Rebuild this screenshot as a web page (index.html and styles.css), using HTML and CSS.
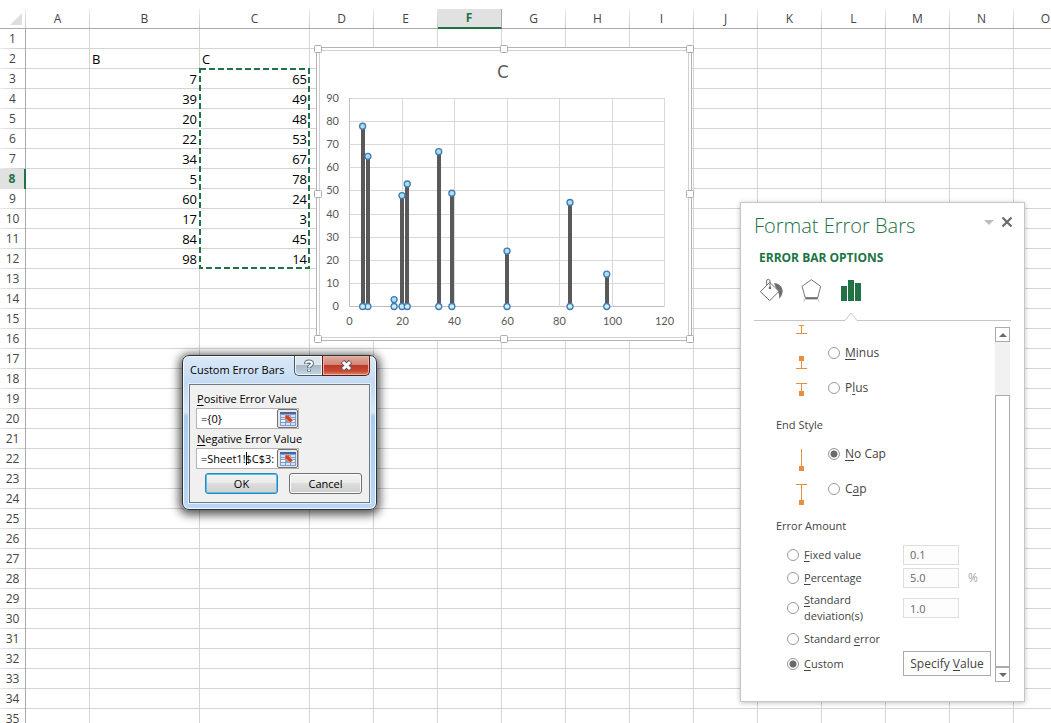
FILE: index.html
```html
<!DOCTYPE html>
<html lang="en">
<head>
<meta charset="utf-8">
<title>Sheet1</title>
<link rel="stylesheet" href="styles.css">
</head>
<body>
<main class="workspace">
  <table class="sheet" id="sheet" aria-label="Sheet1"></table>

  <svg class="ants" width="114" height="204" viewBox="0 0 114 204" aria-hidden="true">
    <rect class="ants-base" x="2" y="2" width="109" height="199"/>
    <rect class="ants-dash" x="2" y="2" width="109" height="199"/>
  </svg>

  <svg class="chart" width="382" height="300" viewBox="313 44 382 300" role="img" aria-label="C">
    <rect class="frame-outer" x="316.5" y="47.5" width="375" height="293"/>
    <rect class="frame-inner" x="319.5" y="50.5" width="369" height="287"/>
    <g id="handles"></g>
    <text class="chart-title" x="503" y="78">C</text>
    <g id="plot"></g>
  </svg>

  <section class="dialog" role="dialog" aria-labelledby="dialog-title">
    <header class="dialog-bar">
      <h2 class="dialog-title" id="dialog-title">Custom Error Bars</h2>
      <div class="caption-buttons">
        <button class="caption help" type="button" aria-label="Help">
          <svg width="12" height="14" viewBox="0 0 12 14"><path class="glyph-edge" d="M3 5C3 1.800 9 1.800 9 4.500C9 6.500 6 6.500 6 9"/><path class="glyph-edge" d="M6 10.500v2"/><path class="glyph" d="M3 4.500C3 1.800 9 1.800 9 4.500C9 6.500 6 6.500 6 8.500"/><path class="glyph" d="M6 10.500v1.500"/></svg>
        </button>
        <button class="caption close" type="button" aria-label="Close">
          <svg width="13" height="11" viewBox="0 0 13 11"><path class="x-edge" d="M2.500 1.500l8 8M10.500 1.500l-8 8"/><path class="x-glyph" d="M3 2l7 7M10 2l-7 7"/></svg>
        </button>
      </div>
    </header>
    <form class="dialog-body">
      <label class="field-label" for="positive"><u>P</u>ositive Error Value</label>
      <div class="ref-field">
        <input class="ref-input" id="positive" type="text" value="={0}">
        <button class="ref-button" type="button" aria-label="Select positive range">
          <svg width="16" height="14" viewBox="0 0 16 14"><use href="#range-icon"/></svg>
        </button>
      </div>
      <label class="field-label" for="negative"><u>N</u>egative Error Value</label>
      <div class="ref-field">
        <input class="ref-input" id="negative" type="text" value="=Sheet1!$C$3:">
        <span class="caret"></span>
        <button class="ref-button" type="button" aria-label="Select negative range">
          <svg width="16" height="14" viewBox="0 0 16 14">
            <g id="range-icon">
              <path fill="#7f9fce" d="M0 0h16v14H0z"/>
              <path fill="#3f68a8" d="M0 0h16v2H0z"/>
              <path fill="#d6e3f4" d="M1 3h4v2H1zM6 3h4v2H6zM11 3h4v2h-4zM1 6h4v1H1zM11 6h4v1h-4zM1 11h4v2H1zM6 11h4v2H6zM11 11h4v2h-4z"/>
              <path fill="#fff" d="M1 8h4v2H1zM11 8h4v2h-4z"/>
              <path fill="#cf3f22" stroke="#f3d0c4" stroke-width=".5" d="M5 3h5.500L9.200 4.500 13 8.200 10.400 10.800 6.600 7.200 5 8.700z"/>
            </g>
          </svg>
        </button>
      </div>
      <div class="dialog-actions">
        <button class="push default" type="button">OK</button>
        <button class="push" type="button">Cancel</button>
      </div>
    </form>
  </section>

  <aside class="pane" aria-labelledby="pane-title">
    <header class="pane-head">
      <h1 class="pane-title" id="pane-title">Format Error Bars</h1>
      <button class="pane-tool" type="button" aria-label="Pane options"><svg width="10" height="5" viewBox="0 0 10 5"><path fill="#bdbdbd" d="M0 0h10L5 5z"/></svg></button>
      <button class="pane-tool" type="button" aria-label="Close pane"><svg width="12" height="12" viewBox="0 0 12 12"><path fill="none" stroke="#6a6a6a" stroke-width="2.200" d="M1.500 1.500l9 9M10.500 1.500l-9 9"/></svg></button>
    </header>
    <h2 class="pane-subtitle">ERROR BAR OPTIONS</h2>
    <nav class="tabs">
      <button class="tab" type="button" aria-label="Fill and line">
        <svg width="24" height="24" viewBox="0 0 72 72"><path fill="#6f6f6f" d="M45 15C60 17 70 25 71 39C71 48 66 57 61 62C61 51 60 44 53 36z"/><path fill="#fff" stroke="#6f6f6f" stroke-width="3" d="M4 41L32 13L60 40L32 68z"/><path fill="none" stroke="#6f6f6f" stroke-width="3" d="M23 21V9Q23 4 28 4Q33 4 33 9V29"/><circle cx="33" cy="30" r="4" fill="#6f6f6f"/></svg>
      </button>
      <button class="tab" type="button" aria-label="Effects">
        <svg width="24" height="24" viewBox="0 0 72 72"><path fill="none" stroke="#777" stroke-width="3" d="M37 5L65 25L56 60H19L9 25z"/><path stroke="#6a6a6a" stroke-width="6" d="M19 61H56"/><path stroke="#c4c4c4" stroke-width="3" d="M17 63L14 74M57 63L61 74"/></svg>
      </button>
      <button class="tab" type="button" aria-label="Error bar options" aria-pressed="true">
        <svg width="24" height="24" viewBox="0 0 24 24"><path fill="#217346" d="M2 8h6v15H2zM9 2h6v21H9zM16 5h6v18h-6z"/></svg>
      </button>
    </nav>
    <svg class="divider-notch" width="14" height="9" viewBox="0 0 14 9" aria-hidden="true"><path fill="#fff" stroke="#c6c6c6" d="M0 8.500h1L7 1l6 7.500h1"/><path stroke="#fff" d="M2 8.500h10"/></svg>
    <div class="pane-scroll">
      <form class="options">
        <div class="tail"><svg width="12" height="14" viewBox="0 0 12 14"><path class="bar-icon" d="M3 4h5v1H3zM5 4h1v9H5zM0 12h11v1H0z"/></svg></div>
        <label class="choice"><svg width="12" height="35" viewBox="0 0 12 35"><path class="bar-icon" d="M3 21h5v5H3zM5 24h1v10H5zM0 33h11v1H0z"/></svg><input class="radio" type="radio" name="direction"><span><u>M</u>inus</span></label>
        <label class="choice"><svg width="12" height="35" viewBox="0 0 12 35"><path class="bar-icon" d="M0 13h11v1H0zM5 13h1v10H5zM3 21h5v5H3z"/></svg><input class="radio" type="radio" name="direction"><span>P<u>l</u>us</span></label>
        <h3 class="group-title">End Style</h3>
        <label class="choice"><svg width="12" height="35" viewBox="0 0 12 35"><path class="bar-icon" d="M5 13h1v18H5zM3 30h5v5H3z"/></svg><input class="radio" type="radio" name="cap" checked><span><u>N</u>o Cap</span></label>
        <label class="choice"><svg width="12" height="35" viewBox="0 0 12 35"><path class="bar-icon" d="M0 13h11v1H0zM5 13h1v18H5zM3 29h5v5H3z"/></svg><input class="radio" type="radio" name="cap"><span>C<u>a</u>p</span></label>
        <h3 class="group-title">Error Amount</h3>
        <div class="amounts">
          <div class="amount"><label class="amount-label"><input class="radio" type="radio" name="amount"><span><u>F</u>ixed value</span></label><input class="number" type="text" value="0.1" disabled aria-label="Fixed value"></div>
          <div class="amount"><label class="amount-label"><input class="radio" type="radio" name="amount"><span><u>P</u>ercentage</span></label><input class="number" type="text" value="5.0" disabled aria-label="Percentage"><span class="unit">%</span></div>
          <div class="amount tall"><label class="amount-label"><input class="radio" type="radio" name="amount"><span><u>S</u>tandard<br>deviation(s)</span></label><input class="number" type="text" value="1.0" disabled aria-label="Standard deviations"></div>
          <div class="amount"><label class="amount-label"><input class="radio" type="radio" name="amount"><span>Standard <u>e</u>rror</span></label></div>
          <div class="amount last"><label class="amount-label"><input class="radio" type="radio" name="amount" checked><span><u>C</u>ustom</span></label><button class="specify" type="button">Specify <u>V</u>alue</button></div>
        </div>
      </form>
      <div class="scrollbar">
        <button class="scroll-arrow" type="button" aria-label="Scroll up"><svg width="8" height="4" viewBox="0 0 8 4"><path fill="#6a6a6a" d="M0 4h8L4 0z"/></svg></button>
        <div class="track"><div class="thumb"></div></div>
        <button class="scroll-arrow" type="button" aria-label="Scroll down"><svg width="8" height="4" viewBox="0 0 8 4"><path fill="#6a6a6a" d="M0 0h8L4 4z"/></svg></button>
      </div>
    </div>
  </aside>
</main>
<script src="sheet.js"></script>
</body>
</html>
```
FILE: styles.css
```css
* { box-sizing: border-box; }

body {
  margin: 0;
  background: #fff;
  color: #444;
  font: 12px/16px "Open Sans", "Noto Sans", sans-serif;
}

button, input { font: inherit; color: inherit; margin: 0; padding: 0; }
h1, h2, h3 { margin: 0; font-weight: 400; }
svg { display: block; }
u { text-underline-offset: 2px; }

.workspace {
  position: relative;
  height: 100vh;
  padding-top: 9px;
  overflow: hidden;
}

/* Worksheet grid */
.sheet {
  table-layout: fixed;
  width: 1px;
  border-collapse: separate;
  border-spacing: 0;
  font-size: 13px;
  line-height: 18px;
}
.col-head { width: 26px; }
.col { width: 64px; }
.col.wide { width: 110px; }

.sheet th, .sheet td { height: 20px; padding: 0; white-space: nowrap; }
.sheet td {
  border-right: 1px solid #d4d4d4;
  border-bottom: 1px solid #d4d4d4;
  padding: 1px 2px 0 2px;
  color: #000;
}
.sheet td.num { text-align: right; }
.sheet th { font-size: 12px; font-weight: 400; text-align: center; }
.sheet thead th {
  padding-right: 1px;
  border-bottom: 1px solid #ababab;
  background: linear-gradient(#ececec, #c8c8c8) right / 1px 100% no-repeat;
}
.sheet tbody th {
  border-right: 1px solid #ababab;
  background: linear-gradient(90deg, #ececec, #c8c8c8) bottom / 100% 1px no-repeat;
}
.sheet thead th.active {
  background: #e1e1e1;
  border-bottom: 2px solid #217346;
  border-right: 1px solid #ababab;
  color: #217346;
  font-weight: 700;
}
.sheet tbody th.active {
  background: #e1e1e1;
  border-right: 2px solid #217346;
  color: #217346;
  font-weight: 700;
}
.corner-mark { margin-left: 10px; }

.ants { position: absolute; left: 198px; top: 67px; }
.ants rect { fill: none; stroke-width: 2px; }
.ants-base { stroke: #fff; }
.ants-dash { stroke: #217346; stroke-dasharray: 6 3; }

/* Chart object */
.chart { position: absolute; left: 313px; top: 44px; font-family: Lato, "Open Sans", sans-serif; }
.frame-outer { fill: #fff; stroke: #b4b4b4; }
.frame-inner { fill: #fff; stroke: #d0d0d0; }
.handle { fill: #fff; stroke: #ababab; }
.chart-title { font-size: 17px; fill: #595959; text-anchor: middle; }
.axis-label { font-size: 11px; fill: #595959; }
.axis-label.x { text-anchor: middle; }
.axis-label.y { text-anchor: end; }
.gridline { stroke: #d9d9d9; }
.axis { stroke: #bfbfbf; }
.stem { stroke: #595959; stroke-width: 4px; }
.marker { fill: #a6e0f6; stroke: #4579b0; stroke-width: 1.3px; }
.marker.base { fill: #c4f0fb; }

/* Custom Error Bars dialog */
.dialog {
  position: absolute;
  left: 182px;
  top: 355px;
  width: 195px;
  padding: 0 6px 6px;
  border: 1px solid #2e3338;
  border-radius: 7px;
  background: linear-gradient(#dce9f7 0, #c3daf3 28px, #d6e8fa 56px, #a9cdf1 60px, #b9d8f7 100%);
  box-shadow: inset 0 0 0 1px #f2f9ff, 0 2px 10px 3px rgba(0, 0, 0, 0.65);
  color: #000;
  font-size: 11px;
}
.dialog-bar { display: flex; justify-content: space-between; height: 28px; }
.dialog-title { padding: 6px 0 0 1px; font-size: 11px; line-height: 16px; white-space: nowrap; }
.caption-buttons { display: flex; height: 20px; }
.caption {
  display: flex;
  align-items: center;
  justify-content: center;
  border: 1px solid #4c5660;
  border-top: 0;
}
.caption.help {
  width: 28px;
  border-right: 0;
  border-radius: 0 0 0 5px;
  background: linear-gradient(#dde6ee 0 45%, #a9b8c6 50%, #c6d6e4 100%);
  box-shadow: inset 0 0 0 1px #eef5fb;
}
.caption.close {
  width: 48px;
  border-color: #5a1c16;
  border-radius: 0 0 5px 0;
  background: linear-gradient(#e0aba0 0, #d38678 45%, #b93a28 50%, #c84a32 80%, #dc8a6c 100%);
  box-shadow: inset 0 0 0 1px #e8b5a8;
}
.glyph-edge { fill: none; stroke: #5f6a75; stroke-width: 4px; }
.glyph { fill: none; stroke: #fff; stroke-width: 2px; }
.x-edge { stroke: #6b5658; stroke-width: 5px; }
.x-glyph { stroke: #fff; stroke-width: 3px; }

.dialog-body {
  padding: 5px 6px 8px;
  border: 1px solid #6f7982;
  background: #f0f0f0;
  box-shadow: 0 0 0 1px #e4f1fd;
}
.field-label { display: block; height: 18px; padding-left: 1px; line-height: 18px; white-space: nowrap; }
.ref-field {
  position: relative;
  display: flex;
  width: 103px;
  height: 21px;
  margin-bottom: 1px;
  border: 1px solid #b4b4b4;
  background: #fff;
}
.ref-input { flex: 1; min-width: 0; padding-left: 4px; border: 0; background: none; }
.ref-button {
  display: flex;
  align-items: center;
  justify-content: center;
  width: 21px;
  height: 19px;
  border: 1px solid #707070;
  border-radius: 2px;
  background: #e8e8e8;
}
.caret { position: absolute; left: 49px; top: 3px; width: 1px; height: 13px; background: #000; }
.dialog-actions { display: flex; gap: 11px; padding: 3px 0 0 9px; }
.push {
  width: 73px;
  height: 21px;
  border: 1px solid #707070;
  border-radius: 3px;
  background: linear-gradient(#f3f3f3 0, #ebebeb 50%, #dddddd 50%, #cfcfcf 100%);
  box-shadow: inset 0 0 0 1px #fbfbfb;
  line-height: 16px;
}
.push.default { border-color: #3c7fb1; box-shadow: inset 0 0 0 1px #48c7f0; }

/* Format pane */
.pane {
  position: absolute;
  left: 740px;
  top: 202px;
  width: 285px;
  padding-bottom: 19px;
  border: 1px solid #c6c6c6;
  background: #fff;
  box-shadow: 0 1px 5px rgba(0, 0, 0, 0.25);
}
.pane-head { display: flex; align-items: flex-start; height: 38px; padding: 9px 11px 0 13px; gap: 7px; }
.pane-title {
  flex: 1;
  font-size: 20px;
  line-height: 28px;
  font-weight: 300;
  color: #217346;
  white-space: nowrap;
}
.pane-tool { display: flex; align-items: center; height: 20px; border: 0; background: none; }
.pane-subtitle { height: 32px; padding: 9px 18px 0; font-weight: 700; font-size: 12px; line-height: 16px; color: #217346; }
.tabs { display: flex; gap: 16px; padding: 5px 0 10px 18px; }
.tab { width: 24px; height: 24px; border: 0; background: none; }
.divider-notch { margin-left: 103px; }
.pane-scroll { display: flex; justify-content: space-between; margin-right: 13px; position: relative; }
.pane-scroll::before, .pane-scroll::after {
  content: "";
  position: absolute;
  top: -1px;
  height: 1px;
  background: #c6c6c6;
}
.pane-scroll::before { left: 13px; width: 91px; }
.pane-scroll::after { left: 117px; right: 0; }
.options { flex: 1; }
.tail { height: 14px; padding-left: 55px; }
.bar-icon { fill: #e78f41; }
.choice { display: flex; align-items: center; height: 35px; padding-left: 55px; }
.choice .radio { margin: 0 5px 0 20px; }
.radio {
  appearance: none;
  flex: none;
  width: 12px;
  height: 12px;
  border: 1px solid #9a9a9a;
  border-radius: 50%;
  background: #fff;
}
.radio:checked { background: radial-gradient(circle, #6a6a6a 0 3px, #fff 4px); }
.group-title { height: 31px; padding: 12px 0 0 35px; font-size: 11px; line-height: 16px; }
.amounts { padding: 6px 0 0 46px; font-size: 11px; }
.amount { display: flex; align-items: center; height: 23px; }
.amount.tall { height: 38px; }
.amount.last { height: 27px; }
.amount-label { display: flex; align-items: center; gap: 5px; width: 116px; white-space: nowrap; }
.number { width: 56px; height: 20px; padding-left: 6px; border: 1px solid #dedede; background: #fdfdfd; color: #666; }
.unit { margin-left: 9px; color: #a6a6a6; font-size: 12px; }
.specify { width: 88px; height: 25px; border: 1px solid #ababab; background: #fdfdfd; font-size: 12px; white-space: nowrap; }
.scrollbar { display: flex; flex-direction: column; width: 15px; margin: 6px 1px 0 0; }
.scroll-arrow {
  display: flex;
  align-items: center;
  justify-content: center;
  height: 15px;
  border: 1px solid #ababab;
  background: #fff;
}
.track { display: flex; height: 325px; padding-top: 53px; background: #f1f1f1; }
.thumb { flex: 1; border: 1px solid #ababab; background: #fff; }
```
FILE: sheet.js
```js
const points = [[7, 65], [39, 49], [20, 48], [22, 53], [34, 67], [5, 78], [60, 24], [17, 3], [84, 45], [98, 14]];
const letters = [..."ABCDEFGHIJKLMNOPQRSTUVWXYZ"];
const sheet = document.getElementById("sheet");

function cell(row, name) {
  if (row === 2 && (name === "B" || name === "C")) return `<td>${name}</td>`;
  const point = points[row - 3];
  if (point && name === "B") return `<td class="num">${point[0]}</td>`;
  if (point && name === "C") return `<td class="num">${point[1]}</td>`;
  return "<td></td>";
}

/* Only the rows and columns that fit in the window are drawn. */
function drawSheet() {
  const columnCount = Math.max(6, Math.ceil((window.innerWidth - 26 - 92) / 64));
  const rowCount = Math.ceil((window.innerHeight - 29) / 20);
  const columns = letters.slice(0, columnCount);
  let html = '<colgroup><col class="col-head">';
  html += columns.map(c => `<col class="col${c === "B" || c === "C" ? " wide" : ""}">`).join("");
  html += '</colgroup><thead><tr><th><svg class="corner-mark" width="12" height="12" viewBox="0 0 12 12"><path fill="#dfdfdf" d="M12 0v12H0z"/></svg></th>';
  html += columns.map(c => `<th scope="col"${c === "F" ? ' class="active"' : ""}>${c}</th>`).join("");
  html += "</tr></thead><tbody>";
  for (let r = 1; r <= rowCount; r++) {
    html += `<tr><th scope="row"${r === 8 ? ' class="active"' : ""}>${r}</th>${columns.map(c => cell(r, c)).join("")}</tr>`;
  }
  sheet.innerHTML = html + "</tbody>";
}
drawSheet();
window.addEventListener("resize", drawSheet);

const xAt = v => 349.5 + v * 2.6250;
const yAt = v => 306.5 - v * 23.11 / 10;
const snap = v => Math.floor(v) + 0.5;
let plot = "";
for (let v = 0; v <= 90; v += 10) {
  const y = snap(yAt(v));
  plot += `<path class="${v ? "gridline" : "axis"}" d="M349 ${y}H665"/>`;
  plot += `<text class="axis-label y" x="339" y="${Math.round(yAt(v) + 3.5)}">${v}</text>`;
}
for (let v = 0; v <= 120; v += 20) {
  const x = snap(xAt(v));
  plot += `<path class="${v ? "gridline" : "axis"}" d="M${x} 98V307"/>`;
  plot += `<text class="axis-label x" x="${x}" y="325">${v}</text>`;
}
for (const [x, y] of points) plot += `<path class="stem" d="M${Math.round(xAt(x))} ${yAt(y)}V306"/>`;
for (const [x, y] of points) {
  plot += `<circle class="marker base" cx="${xAt(x)}" cy="306.5" r="3"/>`;
  plot += `<circle class="marker" cx="${xAt(x)}" cy="${yAt(y)}" r="3"/>`;
}
document.getElementById("plot").innerHTML = plot;

let handles = "";
for (const x of [314, 500, 686]) {
  for (const y of [45, 190, 335]) {
    if (x === 500 && y === 190) continue;
    handles += `<rect class="handle" x="${x + 0.5}" y="${y + 0.5}" width="7" height="7" rx="1"/>`;
  }
}
document.getElementById("handles").innerHTML = handles;
```
